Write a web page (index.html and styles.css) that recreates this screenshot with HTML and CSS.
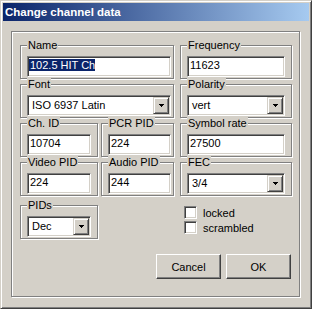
FILE: index.html
```html
<!DOCTYPE html>
<html>
<head>
<meta charset="utf-8">
<link rel="stylesheet" href="styles.css">
</head>
<body>
<div class="window">
  <div class="titlebar">Change channel data</div>
  <div class="client">
    <div class="frame">
      <div class="grid">
        <div class="group span2"><span class="legend">Name</span><div class="edit"><span class="sel">102.5 HIT Ch</span></div></div>
        <div class="group right"><span class="legend">Frequency</span><div class="edit">11623</div></div>

        <div class="group span2"><span class="legend">Font</span><div class="combo"><span class="val">ISO 6937 Latin</span><span class="ddbtn"><svg width="5" height="3" viewBox="0 0 5 3"><path d="M0 0h5v1H0zM1 1h3v1H1zM2 2h1v1H2z" fill="#000"/></svg></span></div></div>
        <div class="group right"><span class="legend">Polarity</span><div class="combo"><span class="val">vert</span><span class="ddbtn"><svg width="5" height="3" viewBox="0 0 5 3"><path d="M0 0h5v1H0zM1 1h3v1H1zM2 2h1v1H2z" fill="#000"/></svg></span></div></div>

        <div class="group"><span class="legend">Ch. ID</span><div class="edit">10704</div></div>
        <div class="group mid"><span class="legend">PCR PID</span><div class="edit">224</div></div>
        <div class="group right"><span class="legend">Symbol rate</span><div class="edit">27500</div></div>

        <div class="group"><span class="legend">Video PID</span><div class="edit">224</div></div>
        <div class="group mid"><span class="legend">Audio PID</span><div class="edit">244</div></div>
        <div class="group right"><span class="legend">FEC</span><div class="combo"><span class="val">3/4</span><span class="ddbtn"><svg width="5" height="3" viewBox="0 0 5 3"><path d="M0 0h5v1H0zM1 1h3v1H1zM2 2h1v1H2z" fill="#000"/></svg></span></div></div>

        <div class="group last"><span class="legend">PIDs</span><div class="combo"><span class="val">Dec</span><span class="ddbtn"><svg width="5" height="3" viewBox="0 0 5 3"><path d="M0 0h5v1H0zM1 1h3v1H1zM2 2h1v1H2z" fill="#000"/></svg></span></div></div>
        <div class="checks">
          <div class="check"><span class="box"></span><span>locked</span></div>
          <div class="check"><span class="box"></span><span>scrambled</span></div>
        </div>
      </div>
      <div class="buttons">
        <button class="btn">Cancel</button>
        <button class="btn">OK</button>
      </div>
    </div>
  </div>
</div>
</body>
</html>
```

FILE: styles.css
```css
html, body {
  margin: 0;
  padding: 0;
  background: #d4d0c8;
}

body {
  font-family: "Liberation Sans", Arial, sans-serif;
  font-size: 11px;
  color: #000;
}

.window {
  box-sizing: border-box;
  width: 312px;
  height: 309px;
  border: 1px solid;
  border-color: #d4d0c8 #404040 #404040 #d4d0c8;
  box-shadow: inset 1px 1px 0 #fff, inset -1px -1px 0 #808080;
  padding: 2px;
  background: #d4d0c8;
}

.titlebar {
  height: 18px;
  line-height: 18px;
  padding-left: 2px;
  background: linear-gradient(to right, #0a246a, #a6caf0);
  color: #fff;
  font-weight: bold;
  font-size: 11.5px;
  white-space: nowrap;
}

.client {
  padding: 10px 0 0 8px;
}

.frame {
  box-sizing: border-box;
  width: 289px;
  height: 266px;
  border: 1px solid #808080;
  box-shadow: inset 1px 1px 0 #fff, 1px 1px 0 #fff;
  padding: 13px 0 0 8px;
}

.grid {
  display: grid;
  grid-template-columns: 78px 73px 115px;
  grid-auto-rows: 34px;
  column-gap: 3px;
  row-gap: 5px;
}

.group {
  box-sizing: border-box;
  height: 34px;
  border: 1px solid #808080;
  box-shadow: inset 1px 1px 0 #fff, 1px 1px 0 #fff;
  padding: 0 6px 1px 6px;
}

.span2 {
  grid-column: span 2;
  padding-right: 2px;
}

.mid {
  padding-right: 2px;
}

.right {
  grid-column: 3;
  margin-left: 3px;
}

.last {
  margin-top: 4px;
}

.legend {
  display: block;
  width: fit-content;
  height: 13px;
  line-height: 13px;
  margin: -7px 0 0 0;
  padding: 0 1px;
  background: #d4d0c8;
  white-space: nowrap;
}

.edit, .combo {
  box-sizing: border-box;
  height: 21px;
  margin-top: 4px;
  border: 1px solid;
  border-color: #808080 #fff #fff #808080;
  box-shadow: inset 1px 1px 0 #404040, inset -1px -1px 0 #d4d0c8;
  background: #fff;
  white-space: nowrap;
  overflow: hidden;
}

.edit {
  padding-left: 2px;
  line-height: 17px;
}

.sel {
  background: #0a246a;
  color: #fff;
  margin-left: -1px;
  padding-left: 1px;
}

.combo {
  display: flex;
  align-items: flex-start;
}

.combo .val {
  padding-left: 4px;
  line-height: 19px;
}

.ddbtn {
  box-sizing: border-box;
  margin: 1px 1px 0 auto;
  width: 16px;
  height: 17px;
  border: 1px solid;
  border-color: #d4d0c8 #404040 #404040 #d4d0c8;
  box-shadow: inset 1px 1px 0 #fff, inset -1px -1px 0 #808080;
  background: #d4d0c8;
  display: flex;
  align-items: center;
  justify-content: center;
}

.ddbtn svg {
  display: block;
}

.checks {
  grid-column: 3;
  margin: 4px 0 0 7px;
  display: flex;
  flex-direction: column;
}

.check {
  display: flex;
  align-items: center;
  height: 16px;
  gap: 6px;
}

.box {
  box-sizing: border-box;
  width: 13px;
  height: 13px;
  border: 1px solid;
  border-color: #808080 #fff #fff #808080;
  box-shadow: inset 1px 1px 0 #404040, inset -1px -1px 0 #d4d0c8;
  background: #fff;
}

.buttons {
  display: flex;
  justify-content: flex-end;
  gap: 5px;
  margin-top: 19px;
  padding-right: 8px;
}

.btn {
  box-sizing: border-box;
  width: 65px;
  height: 25px;
  padding: 0;
  border: 1px solid;
  border-color: #fff #404040 #404040 #fff;
  box-shadow: inset -1px -1px 0 #808080;
  background: #d4d0c8;
  font-family: "Liberation Sans", Arial, sans-serif;
  font-size: 11px;
  color: #000;
}
```
